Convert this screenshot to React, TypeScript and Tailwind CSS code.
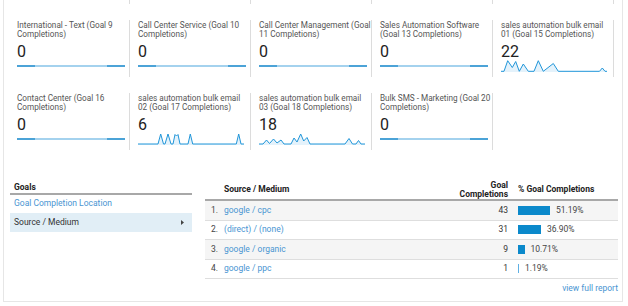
import React from "react"

type Tile = { title: [string, string]; value: string; points?: number[][] }

const row1: Tile[] = [
  { title: ["International - Text (Goal 9", "Completions)"], value: "0" },
  { title: ["Call Center Service (Goal 10", "Completions)"], value: "0" },
  { title: ["Call Center Management (Goal", "11 Completions)"], value: "0" },
  { title: ["Sales Automation Software", "(Goal 13 Completions)"], value: "0" },
  {
    title: ["sales automation bulk email", "01 (Goal 15 Completions)"],
    value: "22",
    points: [
      [0, 12.3], [3, 12.3], [6.7, 1.7], [11.3, 8.5], [14.7, 2.5], [18.3, 12.3], [22.3, 5], [27.3, 12.3],
      [33, 12.3], [37.3, 1.7], [42.3, 12.3], [52.3, 4.5], [57.3, 12.3], [98.5, 12.3], [101.3, 9],
      [104, 12.3], [106, 12.3],
    ],
  },
]

const row2: Tile[] = [
  { title: ["Contact Center (Goal 16", "Completions)"], value: "0" },
  {
    title: ["sales automation bulk email", "02 (Goal 17 Completions)"],
    value: "6",
    points: [
      [0, 12], [20, 12], [22.7, 2], [25.5, 12], [27, 12], [30, 2], [33, 12], [35, 12], [37, 2.5],
      [38.5, 4], [40, 2.5], [42, 12], [50, 12], [52.3, 2], [54.7, 12], [98.3, 12], [100.7, 2],
      [103, 12], [106, 12],
    ],
  },
  {
    title: ["sales automation bulk email", "03 (Goal 18 Completions)"],
    value: "18",
    points: [
      [0, 12], [4, 12], [7.5, 8], [10.5, 11.5], [14.5, 7], [18, 11], [22, 8], [25, 12], [32, 12],
      [35, 6], [38, 10], [41.7, 2], [44.7, 9], [48, 5.5], [51, 12], [86, 12], [90, 6.5], [93.5, 12],
      [97, 12], [99.5, 8.5], [102, 12], [106, 12],
    ],
  },
  { title: ["Bulk SMS - Marketing (Goal 20", "Completions)"], value: "0" },
]

const rows = [
  { n: "1.", src: "google / cpc", goal: "43", pct: "51.19%", w: 32 },
  { n: "2.", src: "(direct) / (none)", goal: "31", pct: "36.90%", w: 23 },
  { n: "3.", src: "google / organic", goal: "9", pct: "10.71%", w: 6.5 },
  { n: "4.", src: "google / ppc", goal: "1", pct: "1.19%", w: 1 },
]

function Spark({ points }: { points?: number[][] }) {
  if (!points) {
    return (
      <svg width="108" height="14" viewBox="0 0 108 14" className="block">
        <line x1="0" y1="7" x2="108" y2="7" stroke="#4aa6de" strokeWidth="1.2" />
        <line x1="0" y1="7" x2="18" y2="7" stroke="#1184c8" strokeWidth="1.2" />
        <line x1="90" y1="7" x2="108" y2="7" stroke="#1184c8" strokeWidth="1.2" />
      </svg>
    )
  }
  const line = points.map((p) => p.join(",")).join(" ")
  const last = points[points.length - 1][0]
  return (
    <svg width="108" height="14" viewBox="0 0 108 14" className="block">
      <polygon points={`0,13 ${line} ${last},13`} fill="#e4f2fb" />
      <polyline points={line} fill="none" stroke="#2196d9" strokeWidth="1" strokeLinejoin="round" />
    </svg>
  )
}

function TileCell({ t }: { t: Tile }) {
  return (
    <div className="h-[57px] w-[121px] border-r border-[#dcdcdc] pl-[8px]">
      <div className="pt-[1px] text-[8.2px] leading-[8.5px] text-[#555] whitespace-nowrap">
        <div>{t.title[0]}</div>
        <div>{t.title[1]}</div>
      </div>
      <div className="mt-[7px] text-[16px] leading-[14px] text-[#222]">{t.value}</div>
      <Spark points={t.points} />
    </div>
  )
}

export default function App() {
  return (
    <div className="h-[306px] w-[628px] overflow-hidden bg-white pl-[3px] font-[Roboto,sans-serif]">
      <div className="h-[302px] w-[620px] border-x border-b border-[#e6e6e6]">
        <div className="ml-[5px] flex flex-col gap-[16px]">
          <div className="flex">
            {[0, 1, 2, 3, 4].map((i) => (
              <div key={i} className="h-[4px] w-[121px] border-r border-[#dcdcdc]" />
            ))}
          </div>
          <div className="flex">
            {row1.map((t, i) => (
              <TileCell key={i} t={t} />
            ))}
          </div>
          <div className="flex">
            {row2.map((t, i) => (
              <TileCell key={i} t={t} />
            ))}
          </div>
        </div>

        <div className="mt-[30px] ml-[6px] flex gap-[13px] text-[8.5px]">
          <div className="w-[182px]">
            <div className="border-b-2 border-[#a8a8a8] pt-[2px] pb-[1px] pl-[4px] font-bold leading-[10px] text-[#222]">
              Goals
            </div>
            <div className="mt-[3px] pl-[4px] leading-[10px] text-[#4a95d2]">Goal Completion Location</div>
            <div className="mt-[5px] flex h-[19px] items-center justify-between bg-[#e1eef6] pl-[4px] pr-[8px] text-[#333]">
              <span>Source / Medium</span>
              <svg width="3" height="5" viewBox="0 0 3 5">
                <polygon points="0,0 3,2.5 0,5" fill="#444" />
              </svg>
            </div>
          </div>

          <div className="w-[413px]">
            <div className="flex h-[21px] items-center border-b-2 border-[#a8a8a8] font-bold text-[#222]">
              <div className="w-[19px]" />
              <div className="flex-1">Source / Medium</div>
              <div className="w-[84px] text-right leading-[9px]">
                <div>Goal</div>
                <div>Completions</div>
              </div>
              <div className="w-[110px] pl-[10px]">% Goal Completions</div>
            </div>
            {rows.map((r, i) => (
              <div
                key={r.n}
                className={`flex h-[19.5px] items-center border-b border-[#dedede] ${i % 2 === 0 ? "bg-[#f5f5f5]" : "bg-white"}`}
              >
                <div className="w-[19px] pl-[6px] text-[#444]">{r.n}</div>
                <div className="flex-1 text-[#4a95d2]">{r.src}</div>
                <div className="w-[84px] text-right text-[#333]">{r.goal}</div>
                <div className="flex w-[110px] items-center pl-[10px] text-[#444]">
                  <div
                    className={`h-[9px] ${r.w < 2 ? "bg-[#5fb0e4]" : "bg-[#0b89cb]"}`}
                    style={{ width: r.w }}
                  />
                  <span className="ml-[6px]">{r.pct}</span>
                </div>
              </div>
            ))}
            <div className="mt-[4px] text-right leading-[10px] text-[#4a95d2]">view full report</div>
          </div>
        </div>
      </div>
    </div>
  )
}
